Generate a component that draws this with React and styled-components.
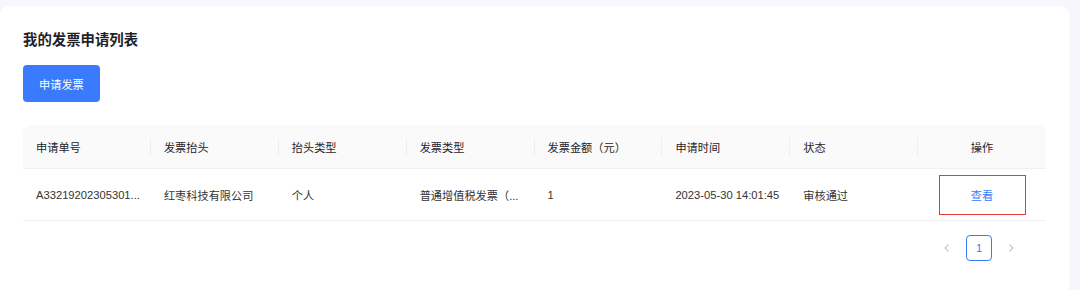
import React from 'react'
import styled, { createGlobalStyle } from 'styled-components'

const GlobalStyle = createGlobalStyle`
    html, body {
        margin: 0;
        padding: 0;
        background: #f6f7fb;
        font-family: "Liberation Sans", "Noto Sans CJK SC", sans-serif;
        color: #1f2329;
    }
`;

const Page = styled.div`
    padding: 6px 11px 0 0;
    height: 290px;
    box-sizing: border-box;
    overflow: hidden;
`;

const Card = styled.section`
    background: #fff;
    border-radius: 8px;
    padding: 26px 23px 40px;
    min-height: 300px;
    box-sizing: border-box;
`;

const Title = styled.h2`
    margin: 0;
    font-size: 14.4px;
    font-weight: 700;
    line-height: 14px;
    color: #1f2329;
    font-family: "Noto Sans CJK SC", sans-serif;
`;

const PrimaryButton = styled.button`
    display: block;
    margin-top: 19px;
    height: 37px;
    padding: 0 16px;
    border: none;
    border-radius: 4px;
    background: #3a7bfd;
    color: #fff;
    font-size: 11.2px;
    font-family: "Noto Sans CJK SC", sans-serif;
    cursor: pointer;
`;

const Table = styled.table`
    margin-top: 23px;
    width: 100%;
    border-collapse: separate;
    border-spacing: 0;
    table-layout: fixed;
    font-size: 11.2px;
    font-family: "Liberation Sans", "Noto Sans CJK SC", sans-serif;
`;

const Th = styled.th`
    position: relative;
    height: 43px;
    padding: 0 13px;
    background: #fafafa;
    border-bottom: 1px solid #f0f0f0;
    font-weight: 400;
    color: #1f2329;
    text-align: ${p => (p.$center ? 'center' : 'left')};
    &:first-child { border-top-left-radius: 8px; }
    &:last-child { border-top-right-radius: 8px; }
    &:not(:last-child)::before {
        content: '';
        position: absolute;
        right: 0;
        top: 50%;
        width: 1px;
        height: 18px;
        transform: translateY(-50%);
        background: #eeeeee;
    }
`;

const Td = styled.td`
    height: 51px;
    padding: 0 13px;
    border-bottom: 1px solid #f0f0f0;
    color: #333;
    white-space: nowrap;
    text-align: ${p => (p.$center ? 'center' : 'left')};
`;

const ActionBox = styled.span`
    display: inline-flex;
    align-items: center;
    justify-content: center;
    width: 87px;
    height: 40px;
    box-sizing: border-box;
    border: 1px solid #e8393a;
    color: #3a7bfd;
    cursor: pointer;
`;

const Pager = styled.div`
    display: flex;
    justify-content: flex-end;
    gap: 6px;
    margin-top: 14px;
    padding-right: 22px;
`;

const PageItem = styled.div`
    width: 26px;
    height: 26px;
    box-sizing: border-box;
    display: flex;
    align-items: center;
    justify-content: center;
    border-radius: 4px;
    font-size: 11.2px;
    color: ${p => (p.$active ? '#3a7bfd' : '#c0c4cc')};
    border: 1px solid ${p => (p.$active ? '#3a7bfd' : 'transparent')};
`;

const Chevron = ({ dir }) => (
    <svg width="10" height="10" viewBox="0 0 10 10" fill="none" stroke="#c4c7cc" strokeWidth="1.1">
        {dir === 'left'
            ? <polyline points="6.5,1.5 3,5 6.5,8.5" />
            : <polyline points="3.5,1.5 7,5 3.5,8.5" />}
    </svg>
);

const columns = ['申请单号', '发票抬头', '抬头类型', '发票类型', '发票金额（元）', '申请时间', '状态', '操作'];

const rows = [
    {
        no: 'A33219202305301...',
        title: '红枣科技有限公司',
        titleType: '个人',
        type: '普通增值税发票（...',
        amount: '1',
        time: '2023-05-30 14:01:45',
        status: '审核通过'
    }
];

export default function App() {
    return (
        <Page>
            <GlobalStyle />
            <Card>
                <Title>我的发票申请列表</Title>
                <PrimaryButton>申请发票</PrimaryButton>
                <Table>
                    <thead>
                        <tr>
                            {columns.map((c, i) => (
                                <Th key={c} $center={i === columns.length - 1}>{c}</Th>
                            ))}
                        </tr>
                    </thead>
                    <tbody>
                        {rows.map(r => (
                            <tr key={r.no}>
                                <Td>{r.no}</Td>
                                <Td>{r.title}</Td>
                                <Td>{r.titleType}</Td>
                                <Td>{r.type}</Td>
                                <Td>{r.amount}</Td>
                                <Td>{r.time}</Td>
                                <Td>{r.status}</Td>
                                <Td $center><ActionBox>查看</ActionBox></Td>
                            </tr>
                        ))}
                    </tbody>
                </Table>
                <Pager>
                    <PageItem><Chevron dir="left" /></PageItem>
                    <PageItem $active>1</PageItem>
                    <PageItem><Chevron dir="right" /></PageItem>
                </Pager>
            </Card>
        </Page>
    )
}
